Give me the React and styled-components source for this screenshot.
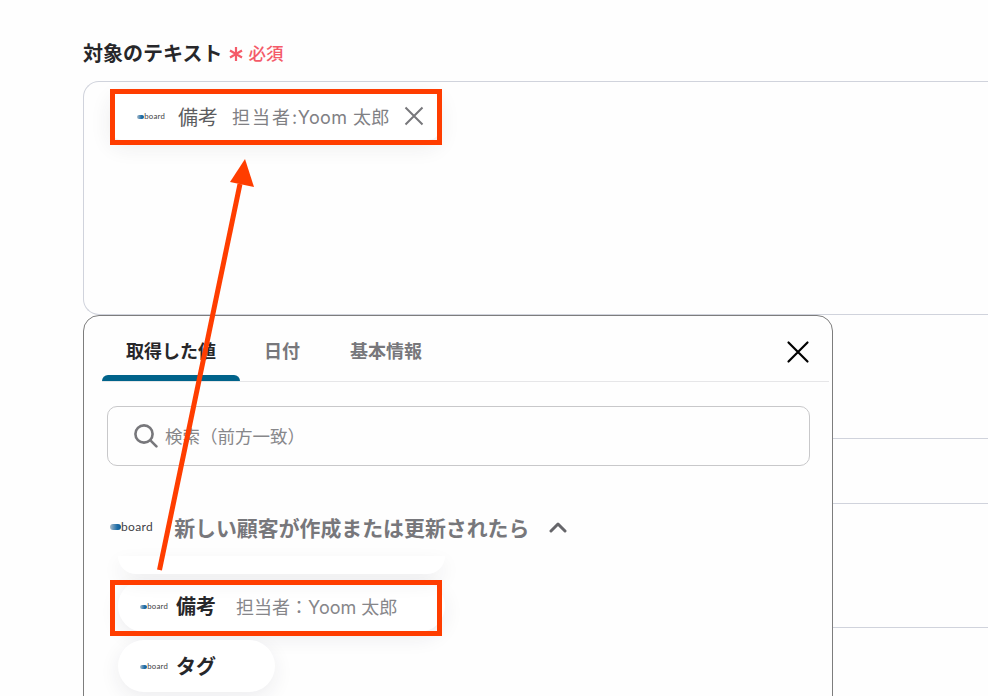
import styled, { createGlobalStyle } from "styled-components";

const GlobalStyle = createGlobalStyle`
  html, body {
    margin: 0;
    padding: 0;
    background: #fefefe;
    overflow: hidden;
  }
  body {
    font-family: Inter, "Noto Sans CJK JP", sans-serif;
  }
`;

const Page = styled.div`
  position: relative;
  width: 988px;
  height: 696px;
  overflow: hidden;
  padding: 40px 0 0 83px;
  box-sizing: border-box;
`;

const FieldLabel = styled.div`
  display: flex;
  align-items: center;
  height: 24px;
  font-size: 20px;
  font-weight: 700;
  color: #27272a;
`;

const Required = styled.span`
  display: flex;
  align-items: center;
  margin-left: 7px;
  font-size: 17.5px;
  font-weight: 500;
  color: #f45b69;
`;

const Asterisk = styled.svg`
  width: 14px;
  height: 14px;
  margin: 3px 5px 0 0;
`;

const TextBox = styled.div`
  width: 1000px;
  height: 234px;
  margin-top: 17px;
  padding: 10px 0 0 27px;
  box-sizing: border-box;
  border: 1px solid #d0d3dc;
  border-right: none;
  border-radius: 16px 0 0 16px;
`;

const Chip = styled.div`
  display: flex;
  align-items: center;
  width: 328px;
  height: 48px;
  padding-left: 26px;
  box-sizing: border-box;
  background: #ffffff;
  border-radius: 10px;
  box-shadow: 0 6px 22px rgba(40, 40, 60, 0.09);
`;

const ChipName = styled.span`
  margin-left: 13px;
  font-size: 20px;
  color: #5c5c60;
`;

const ChipValue = styled.span`
  margin-left: 14px;
  font-size: 18px;
  letter-spacing: 0.4px;
  color: #808084;
  white-space: nowrap;
`;

const SpacedLabel = styled.span`
  letter-spacing: 2px;
`;

const ChipClose = styled.svg`
  margin-left: 14px;
  width: 20px;
  height: 20px;
`;

const FieldLine = styled.div`
  margin-top: ${(p) => p.$gap}px;
  width: 1000px;
  border-top: 1px solid #d0d3dc;
`;

const Modal = styled.div`
  position: absolute;
  left: 83px;
  top: 315px;
  width: 750px;
  height: 420px;
  box-sizing: border-box;
  background: #fefefe;
  border: 1px solid #7d7d7d;
  border-radius: 16px;
`;

const TabBar = styled.div`
  display: flex;
  align-items: stretch;
  height: 65px;
  margin: 0 3px 0 18px;
  border-bottom: 1px solid #e6e6e8;
`;

const Tab = styled.div`
  position: relative;
  display: flex;
  align-items: center;
  justify-content: center;
  width: ${(p) => p.$width}px;
  padding-top: 2px;
  box-sizing: border-box;
  font-size: 18px;
  font-weight: 700;
  color: ${(p) => (p.$active ? "#27272a" : "#77777b")};

  ${(p) =>
    p.$active &&
    `&::after {
      content: "";
      position: absolute;
      left: 0;
      right: 0;
      bottom: 0;
      height: 6px;
      background: #00638a;
      border-radius: 6px 6px 0 0;
    }`}
`;

const ModalClose = styled.svg`
  position: absolute;
  right: 22px;
  top: 24px;
  width: 24px;
  height: 24px;
`;

const Search = styled.div`
  display: flex;
  align-items: center;
  height: 60px;
  margin: 24px 22px 0 23px;
  padding: 0 0 2px 25px;
  box-sizing: border-box;
  border: 1px solid #c8c8ca;
  border-radius: 10px;
  font-size: 17.5px;
  color: #87878a;
`;

const SearchIcon = styled.svg`
  width: 25px;
  height: 25px;
  margin-right: 7px;
`;

const SectionHeader = styled.div`
  position: relative;
  z-index: 1;
  display: flex;
  align-items: center;
  height: 40px;
  margin: 41px 0 0 26px;
  font-size: 20.9px;
  font-weight: 700;
  color: #77777b;
`;

const SectionTitle = styled.span`
  margin-left: 21px;
`;

const Chevron = styled.svg`
  margin-left: 20px;
  width: 18px;
  height: 12px;
`;

const HiddenChip = styled.div`
  position: absolute;
  left: 34px;
  top: 240px;
  width: 327px;
  height: 18px;
  border-radius: 0 0 26px 26px;
  background: #ffffff;
  box-shadow: 0 8px 20px rgba(40, 40, 60, 0.07);
`;

const ChipList = styled.div`
  display: flex;
  flex-direction: column;
  gap: 8px;
  margin: 33px 0 0 34px;
`;

const ValueChip = styled.div`
  display: flex;
  align-items: center;
  align-self: flex-start;
  width: ${(p) => p.$width}px;
  height: 52px;
  padding-left: 22px;
  box-sizing: border-box;
  background: #ffffff;
  border-radius: 26px;
  box-shadow: 0 6px 20px rgba(40, 40, 60, 0.08);
`;

const ValueName = styled.span`
  margin: 0 0 2px 8px;
  font-size: 20px;
  font-weight: 700;
  color: #27272a;
`;

const ValueSample = styled.span`
  margin-left: 20px;
  font-size: 18px;
  color: #86868a;
  white-space: nowrap;
`;

const Highlight = styled.div`
  position: absolute;
  left: 110px;
  top: ${(p) => p.$top}px;
  width: 332px;
  height: 56px;
  box-sizing: border-box;
  border: 5px solid #ff3d00;
`;

const Arrow = styled.svg`
  position: absolute;
  left: 0;
  top: 0;
  width: 988px;
  height: 696px;
  pointer-events: none;
`;

const LogoWrap = styled.span`
  display: inline-flex;
  align-items: center;
  flex-shrink: 0;
  width: ${(p) => p.$size * 3.6}px;
  margin-top: ${(p) => (p.$size < 10 ? 2 : 0)}px;
  font-family: Lato, "Liberation Sans", sans-serif;
  font-weight: 400;
  font-size: ${(p) => p.$size}px;
  letter-spacing: 0.03em;
  line-height: 1;
  color: #3f3f46;
`;

const LogoMark = styled.i`
  display: block;
  width: 1.08em;
  height: 0.55em;
  border-radius: 0.27em;
  background: linear-gradient(90deg, #a9bac8, #1f6ea8 65%, #0f5d94);
`;

const BoardLogo = ({ size }) => (
  <LogoWrap $size={size}>
    <LogoMark />
    board
  </LogoWrap>
);

const App = () => (
  <>
    <GlobalStyle />
    <Page>
      <FieldLabel>
        対象のテキスト
        <Required>
          <Asterisk viewBox="0 0 14 14" fill="none" stroke="#f45b69" strokeWidth="2.2">
            <path d="M7 0v14M1 3.5l12 7M13 3.5l-12 7" />
          </Asterisk>
          必須
        </Required>
      </FieldLabel>
      <TextBox>
        <Chip>
          <BoardLogo size={7.8} />
          <ChipName>備考</ChipName>
          <ChipValue>
            <SpacedLabel>担当者</SpacedLabel>:Yoom 太郎
          </ChipValue>
          <ChipClose viewBox="0 0 20 20" fill="none" stroke="#77777b" strokeWidth="2">
            <path d="M1.5 1.5l17 17M18.5 1.5l-17 17" />
          </ChipClose>
        </Chip>
      </TextBox>
      <FieldLine $gap={123} />
      <FieldLine $gap={64} />
      <FieldLine $gap={123} />

      <Modal>
        <TabBar>
          <Tab $active $width={138}>取得した値</Tab>
          <Tab $width={84}>日付</Tab>
          <Tab $width={124}>基本情報</Tab>
        </TabBar>
        <ModalClose viewBox="0 0 24 24" fill="none" stroke="#000" strokeWidth="2.2" strokeLinecap="round">
          <path d="M2.5 2.5l19 19M21.5 2.5l-19 19" />
        </ModalClose>
        <Search>
          <SearchIcon viewBox="0 0 25 25" fill="none" stroke="#77777b" strokeWidth="2.6" strokeLinecap="round">
            <circle cx="11" cy="11" r="8.6" />
            <path d="M17.4 17.4l6 6" />
          </SearchIcon>
          検索（前方一致）
        </Search>
        <SectionHeader>
          <BoardLogo size={12} />
          <SectionTitle>新しい顧客が作成または更新されたら</SectionTitle>
          <Chevron viewBox="0 0 18 12" fill="none" stroke="#66666a" strokeWidth="3" strokeLinecap="round" strokeLinejoin="round">
            <path d="M2 10l7-7 7 7" />
          </Chevron>
        </SectionHeader>
        <HiddenChip />
        <ChipList>
          <ValueChip $width={327}>
            <BoardLogo size={7.8} />
            <ValueName>備考</ValueName>
            <ValueSample>担当者：Yoom 太郎</ValueSample>
          </ValueChip>
          <ValueChip $width={157}>
            <BoardLogo size={7.8} />
            <ValueName>タグ</ValueName>
          </ValueChip>
        </ChipList>
      </Modal>

      <Highlight $top={89} />
      <Highlight $top={580} />
      <Arrow viewBox="0 0 988 696">
        <path d="M159.5 570L240 184" stroke="#ff3d00" strokeWidth="5" fill="none" />
        <path d="M245 159L254 187L230 182Z" fill="#ff3d00" />
      </Arrow>
    </Page>
  </>
);

export default App;
